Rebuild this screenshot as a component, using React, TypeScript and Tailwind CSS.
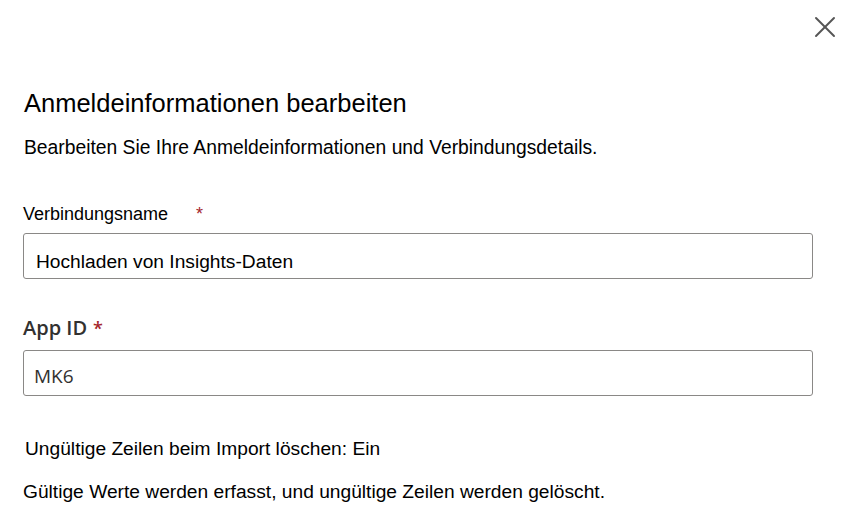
import { X } from 'lucide-react'

// Fluent-style edit-credentials panel: text in Arial metrics, field values in Open Sans.
const SANS = "font-['Liberation_Sans',Arial,sans-serif]"
const OPEN = "font-['Open_Sans','Liberation_Sans',sans-serif]"

function Required({ className }: { className: string }) {
  return <span className={`text-[#a4262c] ${className}`}>*</span>
}

function TextField({ value, textClass }: { value: string; textClass: string }) {
  return (
    <div className="h-[46px] w-[790px] rounded-[3px] border border-[#8a8886] bg-white">
      <div className={textClass}>{value}</div>
    </div>
  )
}

export default function App() {
  return (
    <div className={`h-[530px] w-[851px] overflow-hidden bg-white text-black ${SANS}`}>
      <div className="flex justify-end pr-[14px] pt-[15px]">
        <button className="text-[#555]">
          <X size={24} strokeWidth={1.3} className="h-[24px] w-[24px] scale-150" />
        </button>
      </div>

      <div className="pl-[23px]">
        <h1 className="mt-[48px] pl-[1px] text-[25.5px] font-normal leading-[32px]">Anmeldeinformationen bearbeiten</h1>
        <p className="mt-[17px] pl-[1px] text-[19.3px] leading-[24px]">
          Bearbeiten Sie Ihre Anmeldeinformationen und Verbindungsdetails.
        </p>

        <div className="mt-[42px] flex items-start text-[18px] leading-[24px]">
          <span>Verbindungsname</span>
          <Required className="ml-[28px] text-[18px]" />
        </div>
        <div className="mt-[7px]">
          <TextField value="Hochladen von Insights-Daten" textClass="pl-[12px] pt-[16px] text-[19.2px] leading-[24px]" />
        </div>

        <div className={`mt-[35px] flex items-start text-[20px] font-semibold leading-[28px] text-[#323130] ${OPEN}`}>
          <span>App ID</span>
          <Required className="ml-[6px] text-[18px]" />
        </div>
        <div className="mt-[8px]">
          <TextField value="MK6" textClass={`pl-[10px] pt-[12px] text-[19px] leading-[26px] text-[#323130] ${OPEN}`} />
        </div>

        <p className="mt-[41px] pl-[2px] text-[19.2px] leading-[24px]">Ungültige Zeilen beim Import löschen: Ein</p>
        <p className="mt-[19px] text-[19.2px] leading-[24px]">
          Gültige Werte werden erfasst, und ungültige Zeilen werden gelöscht.
        </p>
      </div>
    </div>
  )
}
